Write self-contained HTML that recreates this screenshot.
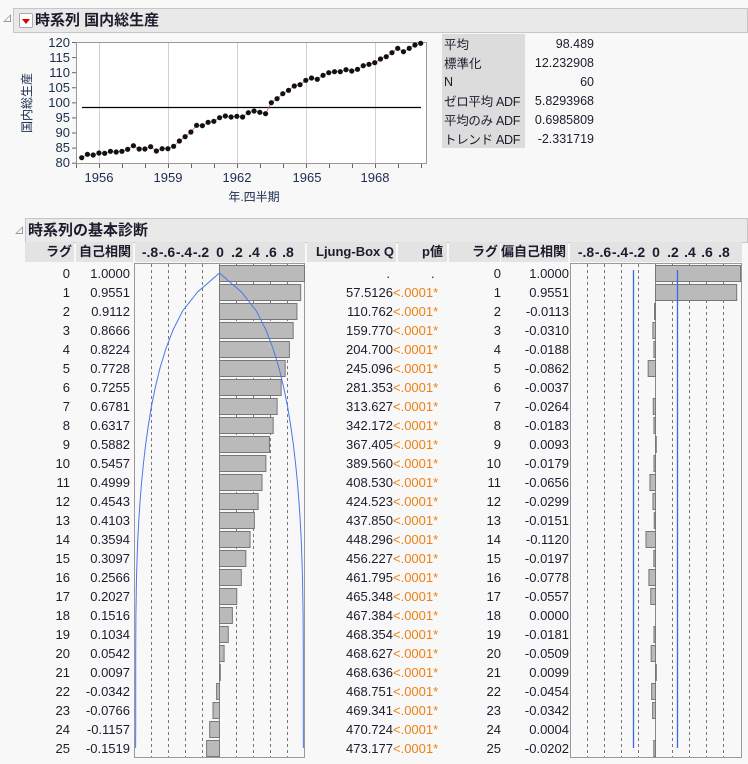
<!DOCTYPE html>
<html><head><meta charset="utf-8">
<style>
body{margin:0;width:748px;height:764px;background:#f8f8f8;font-family:"Liberation Sans","Noto Sans CJK JP",sans-serif;color:#1c1c2c;position:relative;overflow:hidden;font-size:13px}
.abs{position:absolute}
.hdr{position:absolute;background:#e9e9e9;border:1px solid #c6c6c6;font-weight:bold;font-size:15px;line-height:23px}
.tri{position:absolute;width:0;height:0;border-left:8px solid transparent;border-bottom:8px solid #999}
.tri:after{content:"";position:absolute;left:-6px;top:2px;border-left:5px solid transparent;border-bottom:5px solid #f8f8f8}
.st td{padding:0 2px;height:19px;font-size:12.5px;white-space:nowrap}
.hc{position:absolute;top:242px;height:20px;background:#e3e3e3;font-weight:bold;font-size:13px;line-height:20px;text-align:right;white-space:nowrap}
.ax{position:absolute;top:242px;width:20px;margin-left:-10px;text-align:center;font-weight:bold;font-size:14px;line-height:20px;white-space:nowrap}
table.t{position:absolute;left:25px;top:264px;border-collapse:collapse;table-layout:fixed}
table.t td{height:19px;padding:0;font-size:13px;line-height:19px;white-space:nowrap}
.r{text-align:right}
.o{color:#f07f12}
</style></head><body>
<div class="tri" style="left:3px;top:14px"></div>
<div class="hdr" style="left:13px;top:8px;width:733px;height:23px">
 <span class="abs" style="left:5px;top:4px;width:12px;height:13px;background:#fff;border:1px solid #aaa;border-radius:2px"></span>
 <span class="abs" style="left:8px;top:10px;border-left:4px solid transparent;border-right:4px solid transparent;border-top:5px solid #d00"></span>
 <span class="abs" style="left:21px;top:0">時系列 国内総生産</span>
</div>

<svg class="abs" style="left:0;top:30px" width="440" height="180" viewBox="0 30 440 180">
 <rect x="76.5" y="42.5" width="350" height="121" fill="#fff" stroke="#999"/>
 <g stroke="#d0d0d0"><line x1="99.5" y1="43" x2="99.5" y2="163"/><line x1="168.5" y1="43" x2="168.5" y2="163"/><line x1="237.5" y1="43" x2="237.5" y2="163"/><line x1="306.5" y1="43" x2="306.5" y2="163"/><line x1="375.5" y1="43" x2="375.5" y2="163"/></g>
 <g stroke="#666" id="ticks"></g>
 <line x1="82" y1="107.5" x2="421" y2="107.5" stroke="#000" stroke-width="1.3"/>
 <polyline id="ser" fill="none" stroke="#e06060" stroke-width="0.8"/>
 <g id="dots" fill="#111"></g>
 <g font-size="13" fill="#1c2c4c" text-anchor="end" font-family="Liberation Sans,sans-serif">
  <text x="70" y="47">120</text><text x="70" y="62">115</text><text x="70" y="77">110</text><text x="70" y="92">105</text><text x="70" y="107">100</text><text x="70" y="122">95</text><text x="70" y="137">90</text><text x="70" y="152">85</text><text x="70" y="167">80</text>
 </g>
 <g font-size="13" fill="#1c2c4c" text-anchor="middle" font-family="Liberation Sans,sans-serif">
  <text x="99" y="182">1956</text><text x="168" y="182">1959</text><text x="237" y="182">1962</text><text x="307" y="182">1965</text><text x="375" y="182">1968</text>
 </g>
 <text x="254" y="201" font-size="12" fill="#1c2c4c" text-anchor="middle">年.四半期</text>
 <text transform="translate(31,103) rotate(-90)" font-size="12" fill="#1c2c4c" text-anchor="middle">国内総生産</text>
</svg>

<div class="abs" style="left:442px;top:34px;width:83px;height:114px;background:#dcdcdc"></div>
<table class="st abs" style="left:442px;top:34px;border-collapse:collapse;table-layout:fixed">
<colgroup><col style="width:83px"><col style="width:71px"></colgroup>
<tr><td>平均</td><td class="r">98.489</td></tr>
<tr><td>標準化</td><td class="r">12.232908</td></tr>
<tr><td>N</td><td class="r">60</td></tr>
<tr><td style="letter-spacing:-0.3px">ゼロ平均 ADF</td><td class="r">5.8293968</td></tr>
<tr><td style="letter-spacing:-0.3px">平均のみ ADF</td><td class="r">0.6985809</td></tr>
<tr><td style="letter-spacing:-0.3px">トレンド ADF</td><td class="r">-2.331719</td></tr>
</table>

<div class="tri" style="left:15px;top:226px"></div>
<div class="hdr" style="left:25px;top:218px;width:721px;height:23px"><span class="abs" style="left:2px;top:0">時系列の基本診断</span></div>

<div class="hc" style="left:25px;width:47px;padding-right:2px">ラグ</div>
<div class="hc" style="left:76px;width:55px;padding-right:2px">自己相関</div>
<div class="hc" style="left:135px;width:170px"></div>
<div class="hc" style="left:307px;width:87px;padding-right:2px">Ljung-Box Q</div>
<div class="hc" style="left:398px;width:45px;padding-right:4px">p値</div>
<div class="hc" style="left:449px;width:49px;padding-right:2px">ラグ</div>
<div class="hc" style="left:501px;width:65px;padding-right:2px">偏自己相関</div>
<div class="hc" style="left:570px;width:172px"></div>
<div class="ax" style="left:150px">-.8</div><div class="ax" style="left:167px">-.6</div><div class="ax" style="left:184px">-.4</div><div class="ax" style="left:201px">-.2</div><div class="ax" style="left:220px">0</div><div class="ax" style="left:237px">.2</div><div class="ax" style="left:254px">.4</div><div class="ax" style="left:271px">.6</div><div class="ax" style="left:288px">.8</div>
<div class="ax" style="left:586px">-.8</div><div class="ax" style="left:603px">-.6</div><div class="ax" style="left:620px">-.4</div><div class="ax" style="left:637px">-.2</div><div class="ax" style="left:656px">0</div><div class="ax" style="left:673px">.2</div><div class="ax" style="left:690px">.4</div><div class="ax" style="left:707px">.6</div><div class="ax" style="left:724px">.8</div>

<svg class="abs" style="left:0;top:0" width="748" height="764" id="plots">
 <rect x="134.5" y="263.5" width="170" height="494" fill="#f8f8f8" stroke="#999"/>
 <rect x="570.5" y="263.5" width="171" height="494" fill="#f8f8f8" stroke="#999"/>
 <g id="pg"></g>
</svg>

<table class="t">
<colgroup><col style="width:45px"><col style="width:60px"><col style="width:175px"><col style="width:88px"><col style="width:54px"><col style="width:54px"><col style="width:68px"></colgroup>
<tr><td class="r">0</td><td class="r">1.0000</td><td></td><td class="r" style="padding-right:3px">.</td><td style="padding-left:38px">.</td><td class="r">0</td><td class="r">1.0000</td></tr>
<tr><td class="r">1</td><td class="r">0.9551</td><td></td><td class="r">57.5126</td><td class="o">&lt;.0001*</td><td class="r">1</td><td class="r">0.9551</td></tr>
<tr><td class="r">2</td><td class="r">0.9112</td><td></td><td class="r">110.762</td><td class="o">&lt;.0001*</td><td class="r">2</td><td class="r">-0.0113</td></tr>
<tr><td class="r">3</td><td class="r">0.8666</td><td></td><td class="r">159.770</td><td class="o">&lt;.0001*</td><td class="r">3</td><td class="r">-0.0310</td></tr>
<tr><td class="r">4</td><td class="r">0.8224</td><td></td><td class="r">204.700</td><td class="o">&lt;.0001*</td><td class="r">4</td><td class="r">-0.0188</td></tr>
<tr><td class="r">5</td><td class="r">0.7728</td><td></td><td class="r">245.096</td><td class="o">&lt;.0001*</td><td class="r">5</td><td class="r">-0.0862</td></tr>
<tr><td class="r">6</td><td class="r">0.7255</td><td></td><td class="r">281.353</td><td class="o">&lt;.0001*</td><td class="r">6</td><td class="r">-0.0037</td></tr>
<tr><td class="r">7</td><td class="r">0.6781</td><td></td><td class="r">313.627</td><td class="o">&lt;.0001*</td><td class="r">7</td><td class="r">-0.0264</td></tr>
<tr><td class="r">8</td><td class="r">0.6317</td><td></td><td class="r">342.172</td><td class="o">&lt;.0001*</td><td class="r">8</td><td class="r">-0.0183</td></tr>
<tr><td class="r">9</td><td class="r">0.5882</td><td></td><td class="r">367.405</td><td class="o">&lt;.0001*</td><td class="r">9</td><td class="r">0.0093</td></tr>
<tr><td class="r">10</td><td class="r">0.5457</td><td></td><td class="r">389.560</td><td class="o">&lt;.0001*</td><td class="r">10</td><td class="r">-0.0179</td></tr>
<tr><td class="r">11</td><td class="r">0.4999</td><td></td><td class="r">408.530</td><td class="o">&lt;.0001*</td><td class="r">11</td><td class="r">-0.0656</td></tr>
<tr><td class="r">12</td><td class="r">0.4543</td><td></td><td class="r">424.523</td><td class="o">&lt;.0001*</td><td class="r">12</td><td class="r">-0.0299</td></tr>
<tr><td class="r">13</td><td class="r">0.4103</td><td></td><td class="r">437.850</td><td class="o">&lt;.0001*</td><td class="r">13</td><td class="r">-0.0151</td></tr>
<tr><td class="r">14</td><td class="r">0.3594</td><td></td><td class="r">448.296</td><td class="o">&lt;.0001*</td><td class="r">14</td><td class="r">-0.1120</td></tr>
<tr><td class="r">15</td><td class="r">0.3097</td><td></td><td class="r">456.227</td><td class="o">&lt;.0001*</td><td class="r">15</td><td class="r">-0.0197</td></tr>
<tr><td class="r">16</td><td class="r">0.2566</td><td></td><td class="r">461.795</td><td class="o">&lt;.0001*</td><td class="r">16</td><td class="r">-0.0778</td></tr>
<tr><td class="r">17</td><td class="r">0.2027</td><td></td><td class="r">465.348</td><td class="o">&lt;.0001*</td><td class="r">17</td><td class="r">-0.0557</td></tr>
<tr><td class="r">18</td><td class="r">0.1516</td><td></td><td class="r">467.384</td><td class="o">&lt;.0001*</td><td class="r">18</td><td class="r">0.0000</td></tr>
<tr><td class="r">19</td><td class="r">0.1034</td><td></td><td class="r">468.354</td><td class="o">&lt;.0001*</td><td class="r">19</td><td class="r">-0.0181</td></tr>
<tr><td class="r">20</td><td class="r">0.0542</td><td></td><td class="r">468.627</td><td class="o">&lt;.0001*</td><td class="r">20</td><td class="r">-0.0509</td></tr>
<tr><td class="r">21</td><td class="r">0.0097</td><td></td><td class="r">468.636</td><td class="o">&lt;.0001*</td><td class="r">21</td><td class="r">0.0099</td></tr>
<tr><td class="r">22</td><td class="r">-0.0342</td><td></td><td class="r">468.751</td><td class="o">&lt;.0001*</td><td class="r">22</td><td class="r">-0.0454</td></tr>
<tr><td class="r">23</td><td class="r">-0.0766</td><td></td><td class="r">469.341</td><td class="o">&lt;.0001*</td><td class="r">23</td><td class="r">-0.0342</td></tr>
<tr><td class="r">24</td><td class="r">-0.1157</td><td></td><td class="r">470.724</td><td class="o">&lt;.0001*</td><td class="r">24</td><td class="r">0.0004</td></tr>
<tr><td class="r">25</td><td class="r">-0.1519</td><td></td><td class="r">473.177</td><td class="o">&lt;.0001*</td><td class="r">25</td><td class="r">-0.0202</td></tr>
</table>

<script>
var NS="http://www.w3.org/2000/svg";
function el(p,n,a){var e=document.createElementNS(NS,n);for(var k in a)e.setAttribute(k,a[k]);p.appendChild(e);return e;}
var zy=[473,463,465,459,460,454,456,454,448,437,447,447,440,453,446,446,439,423,410,396,376,377,367,364,353,348,351,349,351,338,333,337,341,308,296,281,271,258,254,241,234,238,226,218,215,215,209,213,208,197,193,188,177,170,158,145,155,145,135,130];
var dots=document.getElementById('dots'),pts=[];
for(var i=0;i<60;i++){var x=81.7+i*(420.7-81.7)/59,y=zy[i]/3;pts.push(x.toFixed(1)+","+y.toFixed(1));el(dots,'circle',{cx:x,cy:y,r:2.6});}
document.getElementById('ser').setAttribute('points',pts.join(' '));
var tk=document.getElementById('ticks');
for(var yv=80;yv<=120;yv+=5){var yy=42.5+(120-yv)*3.017;el(tk,'line',{x1:72,x2:76,y1:yy,y2:yy});}
for(var t=0;t<16;t++){var xx=76.5+t*23;el(tk,'line',{x1:xx,x2:xx,y1:164,y2:168});}
var acf=[1,0.9551,0.9112,0.8666,0.8224,0.7728,0.7255,0.6781,0.6317,0.5882,0.5457,0.4999,0.4543,0.4103,0.3594,0.3097,0.2566,0.2027,0.1516,0.1034,0.0542,0.0097,-0.0342,-0.0766,-0.1157,-0.1519];
var pacf=[1,0.9551,-0.0113,-0.0310,-0.0188,-0.0862,-0.0037,-0.0264,-0.0183,0.0093,-0.0179,-0.0656,-0.0299,-0.0151,-0.1120,-0.0197,-0.0778,-0.0557,0,-0.0181,-0.0509,0.0099,-0.0454,-0.0342,0.0004,-0.0202];
var g=document.getElementById('pg');
function grid(x0){for(var j=-4;j<=4;j++){if(j==0)continue;var x=x0+j*17;el(g,'line',{x1:x+0.5,x2:x+0.5,y1:264,y2:757,stroke:'#777','stroke-dasharray':'3,3'});}
 el(g,'line',{x1:x0+0.5,x2:x0+0.5,y1:264,y2:757,stroke:'#888'});}
function bars(x0,arr){for(var k=0;k<26;k++){var v=arr[k]*85,y=265+19*k;if(Math.abs(v)<0.5)continue;var x=v>0?x0+0.5:x0+0.5+v;el(g,'rect',{x:x,y:y+0.5,width:Math.abs(v),height:16,fill:'#bababa',stroke:'#777'});}}
grid(219);grid(655);bars(219,acf);bars(655,pacf);
var s=0,L=[],R=[];L.push("219.5,273");R.push("219.5,273");
for(var k=1;k<26;k++){s+= (k>1?acf[k-1]*acf[k-1]:0);var b=2*Math.sqrt((1+2*s)/60);var y=273+19*k;L.push((219.5-85*b).toFixed(1)+","+y);R.push((219.5+85*b).toFixed(1)+","+y);}
el(g,'polyline',{points:L.join(' '),fill:'none',stroke:'#4a78e8','stroke-width':1});
el(g,'polyline',{points:R.join(' '),fill:'none',stroke:'#4a78e8','stroke-width':1});
el(g,'line',{x1:633.5,x2:633.5,y1:270,y2:748,stroke:'#3a68e0','stroke-width':1.3});
el(g,'line',{x1:677.5,x2:677.5,y1:270,y2:748,stroke:'#3a68e0','stroke-width':1.3});
</script>
</body></html>
